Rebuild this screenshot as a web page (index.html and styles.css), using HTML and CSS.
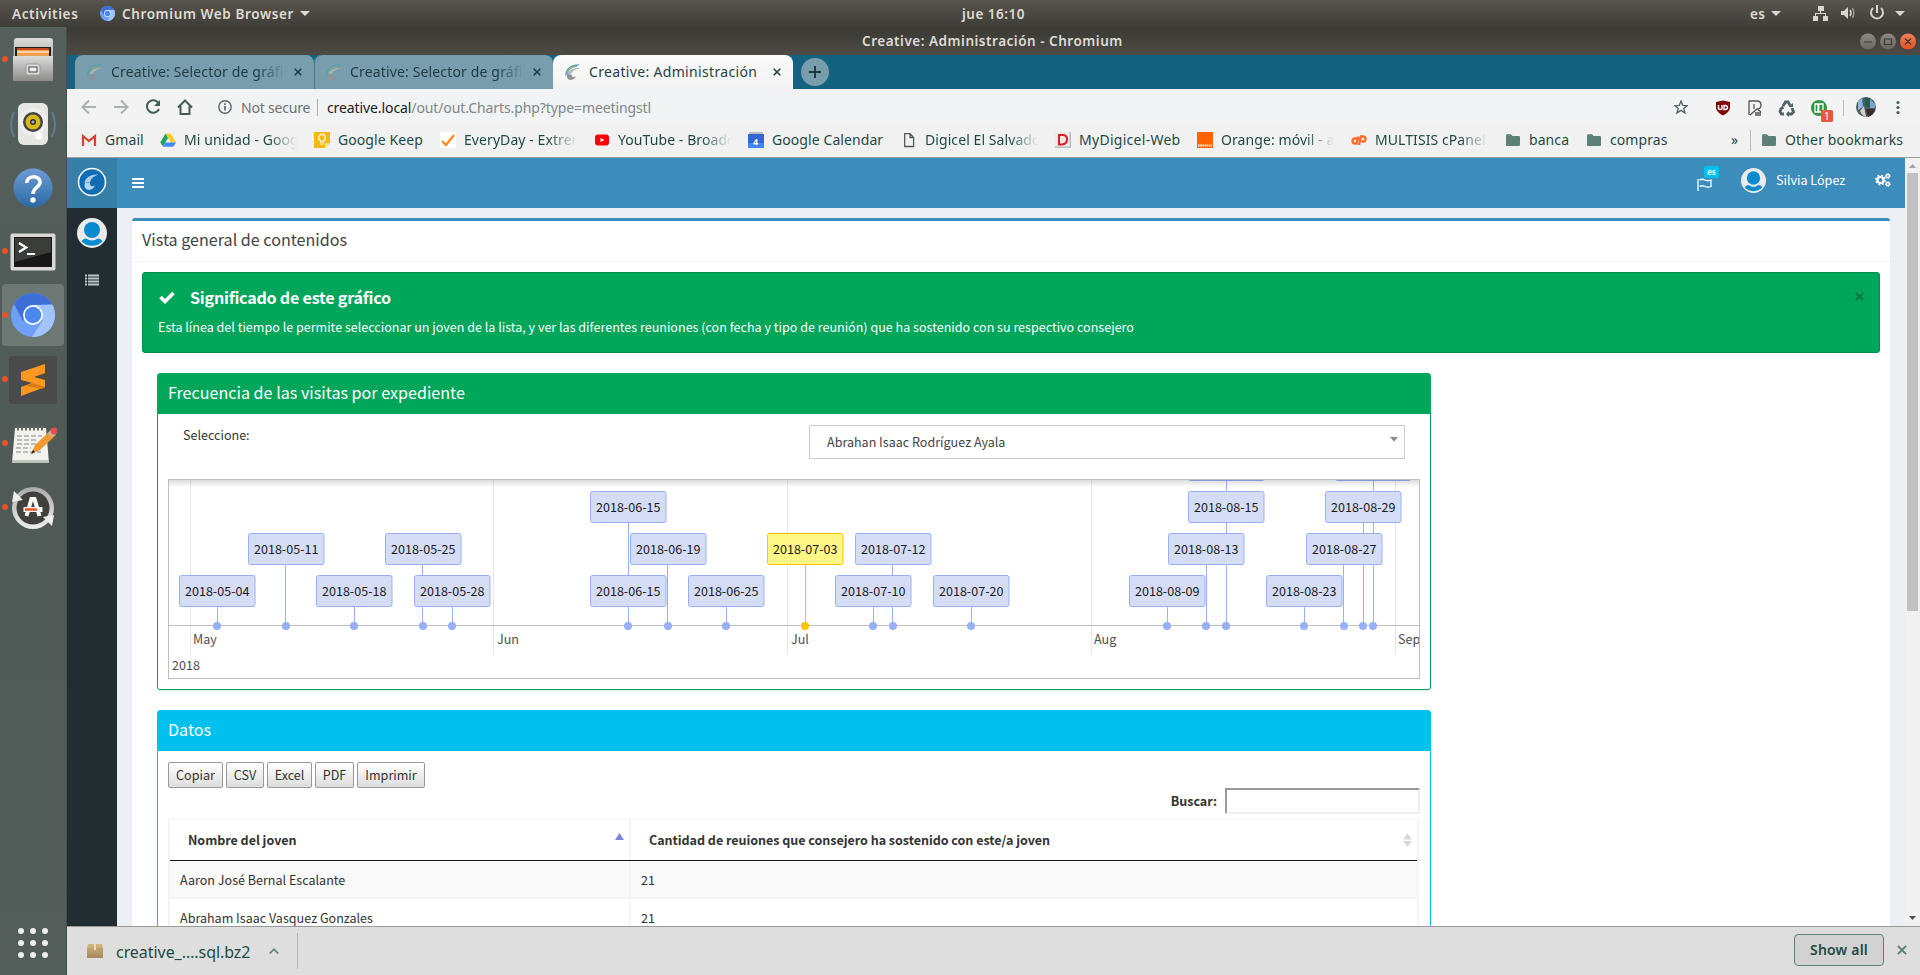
FILE: index.html
```html
<!DOCTYPE html>
<html lang="es">
<head>
<meta charset="utf-8">
<title>Creative: Administración</title>
<link rel="stylesheet" href="styles.css">
</head>
<body>
<svg class="defs" width="0" height="0">
  <defs>
    <linearGradient id="metal" x1="0" y1="0" x2="0" y2="1"><stop offset="0" stop-color="#dcdcda"/><stop offset="1" stop-color="#8c8c8a"/></linearGradient>
    <linearGradient id="help" x1="0" y1="0" x2="0" y2="1"><stop offset="0" stop-color="#6f9bd6"/><stop offset="1" stop-color="#2a6aa5"/></linearGradient>
    <linearGradient id="ring" x1="0" y1="0" x2="0" y2="1"><stop offset="0" stop-color="#aaa"/><stop offset="1" stop-color="#eee"/></linearGradient>
    <linearGradient id="pack" x1="0" y1="0" x2="0" y2="1"><stop offset="0" stop-color="#d3b887"/><stop offset="1" stop-color="#a5875a"/></linearGradient>
    <linearGradient id="winbtn" x1="0" y1="0" x2="0" y2="1"><stop offset="0" stop-color="#8c8981"/><stop offset="1" stop-color="#6a675f"/></linearGradient>
    <linearGradient id="winclose" x1="0" y1="0" x2="0" y2="1"><stop offset="0" stop-color="#f37f5b"/><stop offset="1" stop-color="#e2501f"/></linearGradient>
    <symbol id="chromium" viewBox="0 0 44 44">
      <circle cx="22" cy="22" r="22" fill="#6ea0f8"/>
      <path d="M3 11A22 22 0 0 1 41 11L22 12 12 28Z" fill="#3c6fd8"/>
      <path d="M22 12H41.600A22 22 0 0 1 21 44L32 27Z" fill="#a3c4fb"/>
      <circle cx="22" cy="22" r="10" fill="#fff"/><circle cx="22" cy="22" r="8.300" fill="#4a88f0"/>
    </symbol>
    <symbol id="favicon" viewBox="0 0 16 16">
      <path d="M.8 11.500C1 5 6 .8 14 .8" fill="none" stroke="#4a97cf" stroke-width="1.300"/>
      <path d="M2 10C3 5.500 7 2.500 12 2" fill="none" stroke="#7fae72" stroke-width="1.300"/>
      <path d="M2.500 10.500C4 6 8 3.500 15.500 4C10.500 5 8 6.500 6 9.500Z" fill="#aab3b7"/>
      <path d="M2 10C1.500 13 2.500 15.500 5 16C8 15.800 10 14.500 11 12.500C8.500 13.500 6.500 13 6.500 10.500Z" fill="#8d9498"/>
    </symbol>
    <symbol id="avatar" viewBox="0 0 30 30">
      <circle cx="15" cy="15" r="15" fill="#ebebeb"/><circle cx="15" cy="12" r="8" fill="#0a8bd0"/>
      <path d="M4.500 23.500C7 20 9 20 11 21.500Q15 23.500 19 21.500C21 20 23 20 25.500 23.500A15 15 0 0 1 4.500 23.500Z" fill="#0a8bd0"/>
    </symbol>
    <symbol id="folder" viewBox="0 0 14 12"><path d="M0 1.500Q0 .3 1.200 .3H5L6.500 2H13Q14 2 14 3V11Q14 12 13 12H1Q0 12 0 11Z" fill="#5c8278"/></symbol>
    <symbol id="close" viewBox="0 0 8 8"><path d="M.7.7 7.300 7.300M7.300.7.7 7.300" stroke="currentColor" stroke-width="1.600"/></symbol>
    <symbol id="caret" viewBox="0 0 10 5"><path d="M0 0H10L5 5Z" fill="currentColor"/></symbol>
  </defs>
</svg>

<header class="topbar">
  <span class="activities">Activities</span>
  <svg class="tb-logo" width="15" height="15"><use href="#chromium"/></svg>
  <span class="tb-app">Chromium Web Browser</span>
  <svg class="tb-caret" width="10" height="5"><use href="#caret"/></svg>
  <span class="clock">jue 16:10</span>
  <span class="lang">es</span>
  <svg width="156" height="27" viewBox="1764 0 156 27" fill="#d9d6d0">
    <path d="M1771 11H1781L1776 16ZM1895 11H1905L1900 16Z"/>
    <path d="M1818 6h6v5h-6zM1813 16h5v5h-5zM1823 16h5v5h-5zM1820 11h1v3h-1zM1815 13h11v1h-11zM1815 13h1v3h-1zM1825 13h1v3h-1z"/>
    <path d="M1841 11h3l4-4v12l-4-4h-3z"/>
    <path d="M1850 10Q1852 13 1850 16" fill="none" stroke="#d9d6d0" stroke-width="1.500"/>
    <path d="M1852.500 8Q1855 13 1852.500 18" fill="none" stroke="#a09d95" stroke-width="1.500"/>
    <path d="M1873 8A6 6 0 1 0 1881 8M1877 5V13" fill="none" stroke="#d9d6d0" stroke-width="2"/>
  </svg>
</header>

<div class="desktop">
<nav class="dock">
  <div class="dock-item running"><svg width="44" height="46" viewBox="0 0 44 46"><path d="M3 4Q3 1 6 1H39Q42 1 42 4V40H2Z" fill="url(#metal)"/><path d="M4 10H40V20H4Z" fill="#222"/><path d="M6 11H38V20H6Z" fill="#f0a050"/><path d="M6 11H38V13H6Z" fill="#c9481e"/><path d="M6 15H38" stroke="#fff"/><path d="M2 19H42V44H2Z" fill="url(#metal)"/><rect x="15" y="27" width="14" height="11" rx="2" fill="#ddd" stroke="#999"/><rect x="18" y="30" width="8" height="5" fill="#eee" stroke="#444"/></svg></div>
  <div class="dock-item"><svg width="48" height="48" viewBox="0 0 48 48"><path d="M5 12Q-1 25 5 37M43 12Q49 25 43 37" stroke="#5f7d92" stroke-width="2" fill="none"/><rect x="9" y="3" width="30" height="42" rx="6" fill="#e6e6e3"/><circle cx="24" cy="22" r="14" fill="#eee"/><circle cx="24" cy="22" r="10" fill="#444"/><circle cx="24" cy="22" r="7.500" fill="#d8b91a"/><circle cx="24" cy="22" r="3" fill="#333"/><circle cx="24" cy="22" r="1.500" fill="#aaa"/><circle cx="30" cy="36" r="3.500" fill="#fff"/></svg></div>
  <div class="dock-item"><svg width="40" height="40" viewBox="0 0 40 40"><circle cx="20" cy="20" r="19.500" fill="url(#help)"/><path d="M14 15C13 7 27 7 27 14C27 20 20 19 20 26" stroke="#fff" stroke-width="3.500" fill="none"/><circle cx="20" cy="32" r="2.700" fill="#fff"/></svg></div>
  <div class="dock-item running"><svg width="46" height="38" viewBox="0 0 46 38"><rect x=".5" y=".5" width="45" height="37" rx="2" fill="#d8d8d6"/><rect x="4" y="4" width="38" height="30" fill="#171717"/><path d="M5 5H41V19L5 29Z" fill="#3b3d3b"/><path d="M9 10 16 14.500 9 19" stroke="#fff" stroke-width="2.500" fill="none"/><path d="M17 21H25" stroke="#fff" stroke-width="2"/></svg></div>
  <div class="dock-item running current"><svg width="44" height="44"><use href="#chromium"/></svg></div>
  <div class="dock-item running"><svg width="48" height="48" viewBox="0 0 48 48"><rect width="48" height="48" rx="3" fill="#4a4a4a"/><path d="M12 16 36 8V17L25 21 36 24V31L12 40V31L23 27 12 24Z" fill="#ff9820"/><path d="M17 30 23 27 36 31 33 33Z" fill="#d97b12"/></svg></div>
  <div class="dock-item running"><svg width="48" height="42" viewBox="-2 0 48 42"><path d="M4 5H35L38 40H1Z" fill="#f2f2ee"/><path d="M1 37H38L38 40H1Z" fill="#bfc4bb"/><path d="M6 5H34" stroke="#666" stroke-width="5" stroke-dasharray="2 2"/><path d="M6 13H31M6 17H25M6 21H29M5 25H20M5 29H30" stroke="#aaa" stroke-width="1.300" stroke-dasharray="5 2"/><path d="M20 31 24 22 40 7 45 12 29 27Z" fill="#f0992e"/><path d="M20 31 22 27 24 29Z" fill="#222"/><path d="M37 10 41 6 45 10 41 14Z" fill="#bbb"/><circle cx="43" cy="8" r="3.500" fill="#e0504a"/></svg></div>
  <div class="dock-item running"><svg width="46" height="46" viewBox="0 0 46 46"><circle cx="23" cy="23" r="21" fill="url(#ring)"/><circle cx="23" cy="23" r="16.500" fill="#41403d"/><path d="M2 17 4 6 13 15ZM44 30 42 41 33 32Z" fill="#eee"/><path d="M16.500 31 21.500 14H24.500L29.500 31" stroke="#fff" stroke-width="4" fill="none"/><path d="M13.500 24.500H32.500" stroke="#fff" stroke-width="5"/><path d="M15 24.500H27" stroke="#e95420" stroke-width="2.500"/></svg></div>
  <svg class="dock-apps" width="32" height="32" viewBox="0 0 32 32" fill="#eee"><circle cx="4" cy="4" r="3"/><circle cx="16" cy="4" r="3"/><circle cx="28" cy="4" r="3"/><circle cx="4" cy="16" r="3"/><circle cx="16" cy="16" r="3"/><circle cx="28" cy="16" r="3"/><circle cx="4" cy="28" r="3"/><circle cx="16" cy="28" r="3"/><circle cx="28" cy="28" r="3"/></svg>
</nav>

<div class="window">
  <div class="titlebar"><span class="win-title">Creative: Administración - Chromium</span>
    <div class="win-buttons">
      <svg width="56" height="17" viewBox="0 0 56 17" fill="none" stroke="#3a3935" stroke-width="1.200"><circle cx="8" cy="8.500" r="8" fill="url(#winbtn)" stroke="none"/><circle cx="28" cy="8.500" r="8" fill="url(#winbtn)" stroke="none"/><circle cx="48" cy="8.500" r="8" fill="url(#winclose)" stroke="none"/><path d="M4 9H12M24.500 6H31.500V11.500H24.500ZM45 5.500 51 11.500M51 5.500 45 11.500"/></svg>
    </div>
  </div>
  <div class="tabs">
    <div class="tab"><svg width="16" height="16"><use href="#favicon"/></svg><span class="tab-label fade">Creative: Selector de gráfico</span><svg class="tab-x" width="8" height="8"><use href="#close"/></svg></div>
    <div class="tab second"><svg width="16" height="16"><use href="#favicon"/></svg><span class="tab-label fade">Creative: Selector de gráfico</span><svg class="tab-x" width="8" height="8"><use href="#close"/></svg></div>
    <div class="tab active"><svg width="16" height="16"><use href="#favicon"/></svg><span class="tab-label">Creative: Administración</span><svg class="tab-x" width="8" height="8"><use href="#close"/></svg></div>
    <div class="tab-new"><svg width="12" height="12" viewBox="0 0 12 12"><path d="M6 0V12M0 6H12" stroke="#1b3a3c" stroke-width="2"/></svg></div>
  </div>
  <div class="toolbar">
    <svg class="nav-icons" width="126" height="34" viewBox="67 89 126 34" fill="none" stroke-width="2">
      <path d="M96 107H83M89 100.500 82.500 107 89 113.500M114 107H127M121 100.500 127.500 107 121 113.500" stroke="#a9b2ae"/>
      <path d="M158.500 103A6.300 6.300 0 1 0 159 109" stroke="#3f5e55"/><path d="M160 100V106H154Z" fill="#3f5e55"/>
      <path d="M178 107.500 185 100.500 192 107.500M180.500 106V114H189.500V106" stroke="#3f5e55"/>
    </svg>
    <div class="omnibox">
      <svg width="14" height="14" viewBox="0 0 14 14"><circle cx="7" cy="7" r="6.200" fill="none" stroke="#5f6568" stroke-width="1.400"/><path d="M7 6V10.500M7 3.300V5" stroke="#5f6568" stroke-width="1.700"/></svg>
      <span class="secure">Not secure</span><span class="url"><b>creative.local</b>/out/out.Charts.php?type=meetingstl</span>
      <svg class="star" width="14" height="14" viewBox="0 0 14 14"><path d="M7 1 8.700 5.300 13.300 5.500 9.700 8.400 11 13 7 10.400 3 13 4.300 8.400.7 5.500 5.300 5.300Z" fill="none" stroke="#4c6460" stroke-width="1.300"/></svg>
    </div>
    <svg class="ext" width="220" height="34" viewBox="1700 89 220 34">
      <path d="M1723 100.500 1730 102 1730 108Q1729 113 1723 115.500Q1717 113 1716 108V102Z" fill="#800a0a"/><path d="M1718.500 105V108Q1718.500 109.500 1720.500 109.500T1722 108V105M1724 105.500H1725Q1727.500 105.500 1727.500 107.500T1725 109.500H1724Z" fill="none" stroke="#fff" stroke-width="1.400"/>
      <path d="M1749 115V101H1757Q1761 101 1761 105T1757 109L1750 115M1754 109V104M1757 109 1761 112M1755 113H1761M1755 115H1761" fill="none" stroke="#555" stroke-width="1.300"/>
      <path d="M1783 106 1785.500 102H1788L1790.500 106M1792 108 1793.500 112 1791.500 114H1787M1784 114H1781.500L1780 111.500 1781.500 108" fill="none" stroke="#52636a" stroke-width="2.800"/><path d="M1788.500 107H1793V103ZM1789 111V117L1786 114ZM1779 109H1784L1783 105Z" fill="#52636a"/>
      <circle cx="1819" cy="108" r="8" fill="#359343"/><path d="M1815 104H1818V112H1815ZM1818.800 104H1823V112H1818.800Z" fill="#359343" stroke="#fff" stroke-width="1.300"/>
      <rect x="1821" y="110" width="12" height="12" rx="1.500" fill="#e8573f"/><text x="1824" y="120" class="badge-num">1</text>
      <path d="M1843.500 100V116" stroke="#bbb"/>
      <circle cx="1866" cy="107" r="10" fill="#4b5b60"/><path d="M1858 101 1862 98 1863 107 1858 110Z" fill="#8ab8e0"/><path d="M1865 98H1870V107H1865Z" fill="#245c50"/><path d="M1870 99 1875 104V108H1870Z" fill="#79a7cc"/><path d="M1860 111 1864 106 1866 117Q1862 116 1860 111Z" fill="#d8cdc5"/><path d="M1866 109H1875Q1874 115 1868 117Z" fill="#3a2d2c"/>
      <g fill="#3f5e55"><circle cx="1898" cy="102.500" r="1.600"/><circle cx="1898" cy="107.500" r="1.600"/><circle cx="1898" cy="112.500" r="1.600"/></g>
    </svg>
  </div>
  <div class="bookmarks">
    <a><svg width="16" height="16" viewBox="0 0 16 16"><path d="M1 3H15V14H1Z" fill="#eee"/><path d="M2 14V4L8 9 14 4V14" fill="none" stroke="#d9402f" stroke-width="2.200"/></svg><span>Gmail</span></a>
    <a><svg width="16" height="16" viewBox="0 0 16 16"><path d="M5.500 1.500H10.500L16 10.500H11Z" fill="#fbcc1d"/><path d="M5.500 1.500 8 6 3 14.500 .3 10.500Z" fill="#1ea362"/><path d="M5.500 10.500H16L13.300 14.800H3Z" fill="#4688f4"/></svg><span class="fade">Mi unidad - Google Drive</span></a>
    <a><svg width="16" height="16" viewBox="0 0 16 16"><path d="M0 0H16V11L11 16H0Z" fill="#f6b912"/><path d="M16 11H11V16Z" fill="#ffe07a"/><path d="M6.500 10V8.500Q4.500 7.500 4.800 5.500A3.200 3.200 0 0 1 11.200 5.500Q11.500 7.500 9.500 8.500V10ZM6.500 12H9.500" fill="none" stroke="#fff" stroke-width="1.200"/></svg><span>Google Keep</span></a>
    <a><svg width="16" height="16" viewBox="0 0 16 16"><path d="M0 0H16V16H0Z" fill="#fff"/><path d="M2 9 6 13 14 3" fill="none" stroke="#f68a1e" stroke-width="2.200"/></svg><span class="fade">EveryDay - Extreme</span></a>
    <a><svg width="16" height="16" viewBox="0 0 16 16"><rect x="1" y="2.500" width="14" height="11" rx="3" fill="#f00"/><path d="M6.500 6 10.500 8 6.500 10Z" fill="#fff"/></svg><span class="fade">YouTube - Broadcast</span></a>
    <a><svg width="16" height="16" viewBox="0 0 16 16"><path d="M1 0H15V3H1Z" fill="#bbb"/><path d="M0 2H16V16H0Z" fill="#3367d6"/><path d="M0 11H16V16H0Z" fill="#4285f4"/><text x="5" y="13" class="cal-num">4</text></svg><span>Google Calendar</span></a>
    <a><svg width="16" height="16" viewBox="0 0 16 16"><path d="M3.700 1.700H9L12.600 5.500V14.500H3.700ZM9 1.700V5.500H12.600" fill="none" stroke="#4f5b58" stroke-width="1.300"/></svg><span class="fade">Digicel El Salvador</span></a>
    <a class="wide"><svg width="16" height="16" viewBox="0 0 16 16"><rect width="16" height="16" rx="1" fill="#bbb"/><rect width="14.500" height="14.500" fill="#ececec"/><path d="M4 3V12.500H7Q12 12 12 7.500T8 3Z" fill="none" stroke="#e11b22" stroke-width="2"/></svg><span>MyDigicel-Web</span></a>
    <a><svg width="16" height="16" viewBox="0 0 16 16"><path d="M0 0H16V16H0Z" fill="#ff6200"/><path d="M1 13.500H15" stroke="#fff" stroke-width="2" stroke-dasharray="1.500 .7"/></svg><span class="fade">Orange: móvil - adsl</span></a>
    <a><svg width="16" height="16" viewBox="0 0 16 16"><path d="M7 6.500H4Q1.500 6.500 1.500 9T4 11.500H5.500L7.500 4.500M8 13 10 4.500H12Q14.500 4.500 14.500 7T12 9.500H10.500" fill="none" stroke="#ff6c2c" stroke-width="2.300"/></svg><span class="fade">MULTISIS cPanel login</span></a>
    <a><svg width="16" height="12"><use href="#folder"/></svg><span>banca</span></a>
    <a><svg width="16" height="12"><use href="#folder"/></svg><span>compras</span></a>
    <i class="more">»</i>
    <a class="other"><svg width="16" height="12"><use href="#folder"/></svg><span>Other bookmarks</span></a>
  </div>

  <div class="page">
    <div class="app">
      <header class="app-head">
        <div class="logo"><svg width="30" height="30" viewBox="0 0 30 30"><circle cx="15" cy="15" r="13.500" fill="#0e6cb4" stroke="#fff" stroke-width="1.500"/><path d="M7.500 16C8.500 10 14 7 22 7.500C17 9 14.500 11 13 15Z" fill="#a9cde8"/><path d="M8 16C6.500 20 9 23 12 23C15 22.500 17 21 18 18.500C15 20 12.500 19 13 15.500Z" fill="#b5d4ea"/></svg></div>
        <svg class="burger" width="12" height="10" viewBox="0 0 12 10"><path d="M0 1H12M0 5H12M0 9H12" stroke="#fff" stroke-width="2"/></svg>
        <div class="head-right">
          <div class="flag"><svg width="15" height="13" viewBox="0 0 15 13"><path d="M1 1V13M2.500 2Q5 .5 8 2T14 2V8.500Q11 10 8 8.500T2.500 8.500" fill="none" stroke="#fff" stroke-width="1.300"/></svg><span class="lang-badge">es</span></div>
          <svg class="user-pic" width="25" height="25"><use href="#avatar"/></svg>
          <span class="user">Silvia López</span>
          <svg class="cogs" width="16" height="14" viewBox="0 0 16 14" fill="none" stroke="#fff"><circle cx="5.500" cy="7" r="3" stroke-width="2.200"/><circle cx="5.500" cy="7" r="4.600" stroke-width="1.600" stroke-dasharray="1.900 1.700"/><circle cx="12.800" cy="3" r="1.600" stroke-width="1.500"/><circle cx="12.800" cy="3" r="2.400" stroke-dasharray="1 1"/><circle cx="12.800" cy="11" r="1.600" stroke-width="1.500"/><circle cx="12.800" cy="11" r="2.400" stroke-dasharray="1 1"/></svg>
        </div>
      </header>
      <div class="app-body">
        <aside class="side"><svg width="30" height="30"><use href="#avatar"/></svg><svg class="side-list" width="14" height="12" viewBox="0 0 14 12"><path d="M0 1.500H2M0 4.500H2M0 7.500H2M0 10.500H2M3 1.500H14M3 4.500H14M3 7.500H14M3 10.500H14" stroke="#b8c7ce" stroke-width="2"/></svg></aside>
        <main class="content">
          <section class="box">
            <h3 class="box-title">Vista general de contenidos</h3>
            <div class="box-body">
              <div class="alert">
                <h4><svg width="16" height="13" viewBox="0 0 16 13"><path d="M1.500 6 6 10.500 14.500 2" fill="none" stroke="#fff" stroke-width="3.600"/></svg>Significado de este gráfico</h4>
                <svg class="alert-x" width="9" height="9"><use href="#close"/></svg>
                <p>Esta línea del tiempo le permite seleccionar un joven de la lista, y ver las diferentes reuniones (con fecha y tipo de reunión) que ha sostenido con su respectivo consejero</p>
              </div>
              <div class="panel green">
                <h3>Frecuencia de las visitas por expediente</h3>
                <div class="panel-body">
                  <div class="pick"><label>Seleccione:</label><div class="select"><span>Abrahan Isaac Rodríguez Ayala</span><svg width="8" height="5" viewBox="0 0 8 5"><path d="M0 0H8L4 4.500Z" fill="#888"/></svg></div></div>
                  <div class="timeline">
                    <svg width="1250" height="198" viewBox="0 0 1250 198">
                      <path class="grid-line" d="M21.500 0V174M324.500 0V174M618.500 0V174M922.500 0V174M1226.500 0V174"/>
                      <path class="axis" d="M0 145.500H1250"/>
                      <path class="stem" d="M48.500 127V145M116.500 85V145M185.500 127V145M253.500 85V145M283.500 127V145M459.500 43V145M498.500 85V145M557.500 127V145M704.500 127V145M723.500 85V145M802.500 127V145M998.500 127V145M1037.500 85V145M1057.500 0V145M1135.500 127V145M1174.500 85V145M1194.500 43V145M1204.500 0V145"/>
                      <path class="stem hot" d="M636.500 85V145"/>
                      <g class="dots"><circle cx="48" cy="146" r="4"/><circle cx="117" cy="146" r="4"/><circle cx="185" cy="146" r="4"/><circle cx="254" cy="146" r="4"/><circle cx="283" cy="146" r="4"/><circle cx="459" cy="146" r="4"/><circle cx="499" cy="146" r="4"/><circle cx="557" cy="146" r="4"/><circle class="hot" cx="636" cy="146" r="4"/><circle cx="704" cy="146" r="4"/><circle cx="724" cy="146" r="4"/><circle cx="802" cy="146" r="4"/><circle cx="998" cy="146" r="4"/><circle cx="1037" cy="146" r="4"/><circle cx="1057" cy="146" r="4"/><circle cx="1135" cy="146" r="4"/><circle cx="1175" cy="146" r="4"/><circle cx="1194" cy="146" r="4"/><circle cx="1204" cy="146" r="4"/></g>
                      <g class="visit" transform="translate(10 95)"><rect/><text x="6" y="21">2018-05-04</text></g>
                      <g class="visit" transform="translate(79 53)"><rect/><text x="6" y="21">2018-05-11</text></g>
                      <g class="visit" transform="translate(147 95)"><rect/><text x="6" y="21">2018-05-18</text></g>
                      <g class="visit" transform="translate(216 53)"><rect/><text x="6" y="21">2018-05-25</text></g>
                      <g class="visit" transform="translate(245 95)"><rect/><text x="6" y="21">2018-05-28</text></g>
                      <g class="visit" transform="translate(421 95)"><rect/><text x="6" y="21">2018-06-15</text></g>
                      <g class="visit" transform="translate(421 11)"><rect/><text x="6" y="21">2018-06-15</text></g>
                      <g class="visit" transform="translate(461 53)"><rect/><text x="6" y="21">2018-06-19</text></g>
                      <g class="visit" transform="translate(519 95)"><rect/><text x="6" y="21">2018-06-25</text></g>
                      <g class="visit hot" transform="translate(598 53)"><rect/><text x="6" y="21">2018-07-03</text></g>
                      <g class="visit" transform="translate(666 95)"><rect/><text x="6" y="21">2018-07-10</text></g>
                      <g class="visit" transform="translate(686 53)"><rect/><text x="6" y="21">2018-07-12</text></g>
                      <g class="visit" transform="translate(764 95)"><rect/><text x="6" y="21">2018-07-20</text></g>
                      <g class="visit" transform="translate(960 95)"><rect/><text x="6" y="21">2018-08-09</text></g>
                      <g class="visit" transform="translate(999 53)"><rect/><text x="6" y="21">2018-08-13</text></g>
                      <g class="visit" transform="translate(1019 11)"><rect/><text x="6" y="21">2018-08-15</text></g>
                      <g class="visit" transform="translate(1019 -31)"><rect/></g>
                      <g class="visit" transform="translate(1097 95)"><rect/><text x="6" y="21">2018-08-23</text></g>
                      <g class="visit" transform="translate(1137 53)"><rect/><text x="6" y="21">2018-08-27</text></g>
                      <g class="visit" transform="translate(1156 11)"><rect/><text x="6" y="21">2018-08-29</text></g>
                      <g class="visit" transform="translate(1166 -31)"><rect/></g>
                      <g class="month"><text x="24" y="164">May</text><text x="328" y="164">Jun</text><text x="622" y="164">Jul</text><text x="925" y="164">Aug</text><text x="1229" y="164">Sep</text><text x="3" y="190">2018</text></g>
                    </svg>
                  </div>
                </div>
              </div>
              <div class="panel blue">
                <h3>Datos</h3>
                <div class="panel-body">
                  <div class="buttons"><button class="w-copiar">Copiar</button><button class="w-csv">CSV</button><button class="w-excel">Excel</button><button class="w-pdf">PDF</button><button class="w-print">Imprimir</button></div>
                  <div class="search"><label>Buscar:</label><input type="text"></div>
                  <div class="table">
                    <div class="tr th"><div>Nombre del joven<svg width="9" height="14" viewBox="0 0 9 14"><path d="M0 7 4.500 0 9 7Z" fill="#7c82d8"/></svg></div><div>Cantidad de reuiones que consejero ha sostenido con este/a joven<svg width="9" height="14" viewBox="0 0 9 14"><path d="M0 6.500 4.500 0 9 6.500ZM0 8H9L4.500 14Z" fill="#d9d9d9"/></svg></div></div>
                    <div class="tr odd"><div>Aaron José Bernal Escalante</div><div>21</div></div>
                    <div class="tr"><div>Abraham Isaac Vasquez Gonzales</div><div>21</div></div>
                  </div>
                </div>
              </div>
            </div>
          </section>
        </main>
      </div>
    </div>
    <div class="scroll"><svg width="7" height="4" viewBox="0 0 7 4"><path d="M0 4H7L3.500 0Z" fill="#a3a3a3"/></svg><div class="thumb"></div><svg width="7" height="4" viewBox="0 0 7 4"><path d="M0 0H7L3.500 4Z" fill="#505050"/></svg></div>
  </div>

  <footer class="downloads">
    <svg width="16" height="14" viewBox="0 0 16 14"><path d="M1 0H15L16 5V14H0V5Z" fill="url(#pack)"/><path d="M0 5H16" stroke="#b8996b"/><path d="M7 0H9V6H7Z" fill="#ecdcb8"/></svg>
    <span class="file">creative_….sql.bz2</span>
    <svg class="up" width="10" height="6" viewBox="0 0 10 6"><path d="M.7 5.500 5 1.200 9.300 5.500" fill="none" stroke="#5c8278" stroke-width="1.700"/></svg>
    <i class="dl-sep"></i>
    <button class="show-all">Show all</button>
    <svg class="dl-x" width="10" height="10"><use href="#close"/></svg>
  </footer>
</div>
</div>
</body>
</html>
```

FILE: styles.css
```css
* { box-sizing: border-box; }
body { margin: 0; width: 1920px; height: 975px; overflow: hidden; font-family: "Noto Sans", "Open Sans", sans-serif; font-size: 14px; display: flex; flex-direction: column; }
svg { flex: none; display: block; }
.defs { position: absolute; }

/* desktop top panel */
.topbar { height: 27px; flex: none; display: flex; align-items: center; background: linear-gradient(#59554e, #3e3d38); color: #dfdbd2; font-weight: 600; font-size: 13.5px; letter-spacing: .62px; }
.activities { margin-left: 12px; width: 88px; white-space: nowrap; }
.tb-logo { margin-right: 7px; }
.tb-app { width: 172px; white-space: nowrap; }
.tb-caret { margin-left: 6px; }
.clock { margin-left: 652px; width: 66px; white-space: nowrap; letter-spacing: .5px; }
.lang { margin-left: auto; width: 14px; letter-spacing: .3px; }

.desktop { display: flex; flex: 1; min-height: 0; }
.dock { width: 67px; flex: none; padding-top: 1px; background: linear-gradient(#55605c, #4f5a57 50%, #535d59); border-right: 1px solid #464d4a; display: flex; flex-direction: column; }
.dock-item { height: 64px; display: flex; align-items: center; justify-content: center; position: relative; }
.dock-item.current { background: #6d7774; height: 62px; margin: 0 2px 2px; border-radius: 4px; }
.dock-item.running::before { content: ""; position: absolute; left: 2px; top: 28px; width: 6px; height: 6px; border-radius: 50%; background: #e95420; }
.dock-item.current::before { left: 0; }
.dock-apps { margin: auto 0 16px 17px; }

.window { flex: 1; min-width: 0; display: flex; flex-direction: column; }
.titlebar { height: 28px; flex: none; background: linear-gradient(#3a3934, #4d4b45); color: #dfdbd2; font-weight: 600; font-size: 13.5px; letter-spacing: .52px; display: flex; align-items: center; }
.win-title { margin-left: 795px; white-space: nowrap; }
.win-buttons { margin: 0 4px 0 auto; }

.tabs { height: 34px; flex: none; background: #13637f; display: flex; padding-left: 8px; align-items: flex-start; }
.tab { width: 239px; height: 34px; padding: 0 12px; background: #789eae; display: flex; align-items: center; border-radius: 8px 8px 0 0; color: #1d3b41; }
.tab.second { width: 239px; box-shadow: inset 1px 0 #4d7583; }
.tab.active { width: 240px; background: linear-gradient(#fafafa, #f3f3f3); color: #26423f; }
.tab-label { margin-left: 8px; width: 176px; overflow: hidden; white-space: nowrap; letter-spacing: .33px; padding-bottom: 2px; }
.tab:not(.active) .tab-label { letter-spacing: .15px; }
.tab-x { margin-left: 8px; }
.tab-new { width: 28px; height: 28px; border-radius: 50%; background: #789eae; margin: 3px 0 0 8px; display: flex; align-items: center; justify-content: center; }
.fade { -webkit-mask-image: linear-gradient(90deg, #000 calc(100% - 28px), transparent); mask-image: linear-gradient(90deg, #000 calc(100% - 28px), transparent); }

.toolbar { height: 34px; flex: none; background: #f3f3f3; display: flex; }
.omnibox { margin-left: 14px; width: 1491px; height: 33px; border-radius: 16px; background: #f1f3f4; display: flex; align-items: center; padding: 3px 10px 0 11px; color: #80868b; letter-spacing: -.1px; }
.secure { margin-left: 9px; padding-right: 7px; line-height: 17px; border-right: 1px solid #aaa; color: #6a7074; width: 84px; padding-left: 7px; white-space: nowrap; letter-spacing: -.2px; }
.secure { margin-left: 2px; }
.url { margin-left: 9px; white-space: nowrap; }
.url b { font-weight: 400; color: #202124; }
.star { margin-left: auto; }
.ext { margin-left: auto; }
.badge-num { font-size: 10px; fill: #fff; }
.cal-num { font-size: 9px; font-weight: 700; fill: #fff; }

.bookmarks { height: 35px; flex: none; background: #f1f1f1; border-bottom: 1px solid #9d9d9d; padding: 0 0 0 14px; display: grid; grid-template-columns: 79px 154px 126px 154px 154px 153px 154px 142px 154px 154px 81px 145px 20px 1fr; align-items: center; color: #1f4a42; letter-spacing: .08px; }
.bookmarks a { display: flex; align-items: center; white-space: nowrap; }
.bookmarks a span { margin-left: 8px; padding-bottom: 2px; }
.bookmarks .wide span { letter-spacing: .28px; }
.bookmarks a .fade { width: 113px; overflow: hidden; }
.more { font-style: normal; padding-bottom: 2px; }
.other { border-left: 1px solid #bbb; padding-left: 10px; margin-left: -1px; letter-spacing: .15px; }

/* administration page */
.page { flex: 1; min-height: 0; display: flex; font-family: "Noto Sans CJK JP", "Noto Sans CJK SC", sans-serif; font-size: 12.55px; line-height: 20px; color: #333; }
.app { flex: 1; min-width: 0; height: 768px; overflow: hidden; background: #ecf0f5; }
.app-head { height: 50px; background: #3c8dbc; display: flex; align-items: center; color: #fff; }
.logo { width: 50px; height: 50px; background: #367fa9; padding: 9px 10px; }
.burger { margin-left: 15px; }
.head-right { margin-left: auto; display: flex; align-items: center; height: 50px; padding-right: 14px; }
.flag { position: relative; width: 44px; padding-top: 3px; }
.lang-badge { position: absolute; left: 7px; top: -9px; width: 15px; height: 12px; border-radius: 2px; background: #00c0ef; font-size: 8px; font-weight: 700; line-height: 11px; text-align: center; }
.user-pic { margin: -5px 10px 0 0; }
.user { width: 70px; margin: -6px 29px 0 0; white-space: nowrap; }
.cogs { margin-top: -6px; }
.app-body { display: flex; height: 718px; }
.side { width: 50px; flex: none; background: #222d32; display: flex; flex-direction: column; align-items: center; padding-top: 10px; }
.side-list { margin-top: 26px; }
.content { flex: 1; padding: 10px 15px 0; }
.box { background: #fff; border-top: 3px solid #3c8dbc; border-radius: 3px; height: 800px; box-shadow: 0 1px 1px rgba(0,0,0,.1); }
h3, h4, p { margin: 0; font-weight: 400; }
.box-title { font-size: 16.13px; line-height: 20px; padding: 8px 10px 12px; color: #444; border-bottom: 1px solid #f4f4f4; height: 41px; }
.box-body { padding: 10px; }
.alert { height: 81px; border: 1px solid #008d4c; border-radius: 3px; background: #00a65a; color: #fff; padding: 14px 15px; position: relative; }
.alert h4 { font-size: 16.13px; font-weight: 700; display: flex; align-items: center; gap: 15px; line-height: 20px; padding-left: 1px; letter-spacing: -.23px; }
.alert-x { position: absolute; right: 15px; top: 19px; color: #05753f; }
.alert p { margin-top: 10px; white-space: nowrap; }
.panel { width: 1274px; margin: 20px 0 0 15px; border: 1px solid #00a65a; border-radius: 3px; box-shadow: 0 1px 1px rgba(0,0,0,.1); }
.panel.blue { border-color: #00c0ef; height: 400px; }
.panel h3 { height: 40px; padding: 8px 10px; background: #00a65a; color: #fff; font-size: 16.13px; line-height: 20px; }
.panel.blue h3 { background: #00c0ef; }
.panel-body { padding: 11px 10px 10px; }
.green .panel-body { height: 275px; }
.pick { display: flex; justify-content: space-between; padding: 0 15px; height: 54px; color: #333; }
.select { width: 596px; height: 34px; border: 1px solid #ccc; display: flex; justify-content: space-between; padding: 6px 6px 6px 17px; color: #444; }
.select svg { margin-top: 5px; }
.timeline { width: 1252px; height: 200px; border: 1px solid #bfbfbf; overflow: hidden; position: relative; }
.timeline::after { content: ""; position: absolute; left: 0; right: 0; top: 0; height: 7px; background: linear-gradient(rgba(0,0,0,.14), transparent); }
.grid-line { stroke: #e5e5e5; }
.axis { stroke: #bfbfbf; }
.stem { stroke: #97b0f8; fill: none; }
.stem.hot { stroke: #ffc200; }
.dots { fill: #97b0f8; }
.dots .hot { fill: #ffc200; }
.visit rect { x: .5px; y: .5px; width: 75.5px; height: 31px; rx: 2px; fill: #d5ddf6; stroke: #97b0f8; }
.visit.hot rect { fill: #fff785; stroke: #ffc200; }
.visit text { fill: #1a1a1a; }
.month { fill: #4d4d4d; }
.buttons { display: flex; gap: 3px; height: 26px; }
.buttons button { height: 26px; border: 1px solid #999; border-radius: 2px; background: linear-gradient(#fff, #ddd); color: #333; font: inherit; line-height: 20px; padding: 0; }
.w-copiar { width: 55px; } .w-csv { width: 38px; } .w-excel { width: 45px; } .w-pdf { width: 39px; } .w-print { width: 68px; }
.search { display: flex; justify-content: flex-end; align-items: center; gap: 8px; font-weight: 700; height: 26px; }
.search input { width: 195px; height: 26px; border: 2px solid; border-color: #999 #eee #eee #999; background: #fff; }
.table { width: 1251px; margin-top: 5px; border: 1px solid #f4f4f4; border-width: 1px 2px 0; }
.tr { display: grid; grid-template-columns: 459px 1fr; height: 38px; border-bottom: 2px solid #f4f4f4; }
.tr > div { padding: 9px 10px 0; }
.tr > div + div { border-left: 2px solid #f4f4f4; }
.tr.odd { background: #f9f9f9; }
.tr.th { height: 41px; border-bottom: 1px solid #111; font-weight: 700; letter-spacing: -.04px; }
.tr.th > div { padding: 10px 5px 0 18px; display: flex; justify-content: space-between; }
.tr.th svg { margin-top: 3px; }

.scroll { width: 15px; flex: none; background: #f1f1f1; display: flex; flex-direction: column; align-items: center; padding: 6px 0; }
.thumb { width: 11px; height: 438px; background: #c1c1c1; margin: 5px 0 auto; }

.downloads { height: 49px; flex: none; background: #dedede; border-top: 1px solid #999; display: flex; align-items: center; padding-left: 20px; color: #1f4a42; }
.file { margin: 0 0 0 13px; padding-top: 1px; width: 135px; font-size: 16px; letter-spacing: -.05px; white-space: nowrap; }
.up { margin-left: 18px; }
.dl-sep { width: 1px; height: 36px; background: #b5b5b5; margin-left: 18px; }
.show-all { margin: 0 0 2px auto; width: 90px; height: 32px; border: 1px solid #5c8278; border-radius: 4px; background: #d2d2d2; color: #1f4a42; font: 600 14px "Noto Sans", sans-serif; letter-spacing: .2px; padding: 0 0 2px; }
.dl-x { margin: 0 13px 2px 13px; color: #5c8278; }
```
